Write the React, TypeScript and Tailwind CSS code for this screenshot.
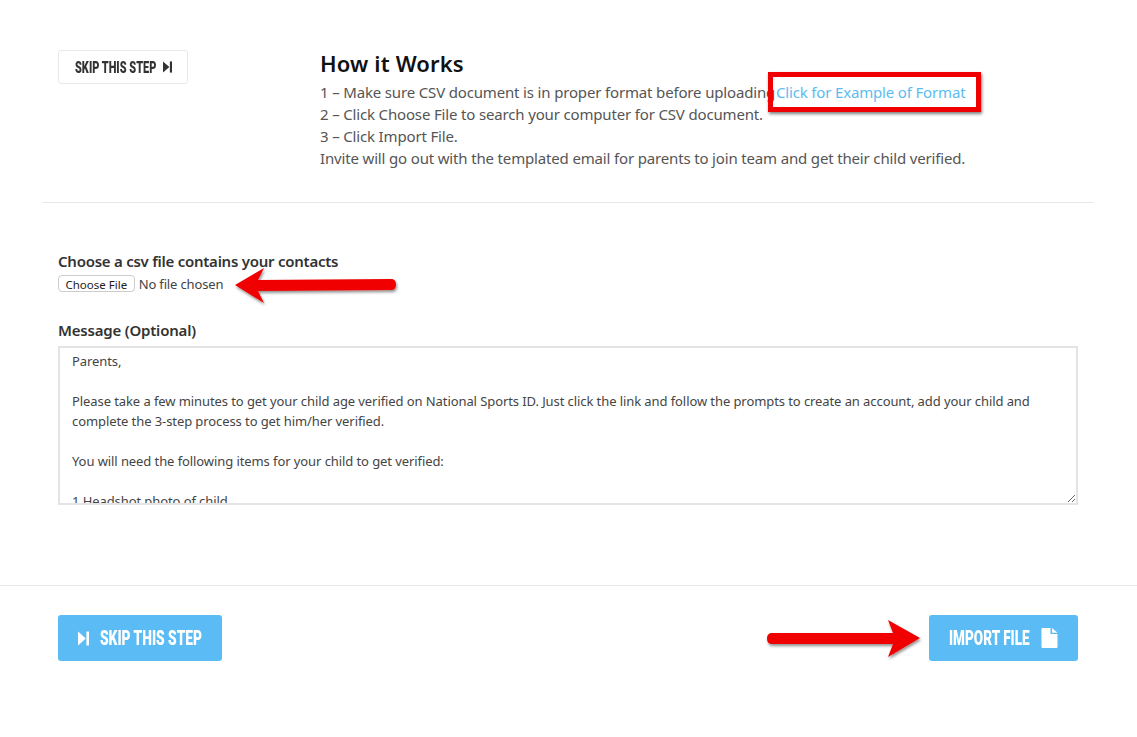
import React from "react";

const msg = `Parents,

Please take a few minutes to get your child age verified on National Sports ID. Just click the link and follow the prompts to create an account, add your child and complete the 3-step process to get him/her verified.

You will need the following items for your child to get verified:

1 Headshot photo of child
2 Copy of birth certificate`;

function SkipIcon({ className }: { className: string }) {
  return (
    <svg viewBox="0 0 11 14" className={className} fill="currentColor" preserveAspectRatio="none">
      <path d="M0 0.5 L7.8 7 L0 13.5 Z" />
      <rect x="8.4" y="0.5" width="2.6" height="13" />
    </svg>
  );
}

export default function App() {
  return (
    <div className="relative h-[737px] w-[1137px] overflow-hidden bg-white font-['Noto_Sans',sans-serif] text-[#555]">
      <div className="ml-[43px] mr-[44px] flex h-[203px] border-b border-[#e6e6e6] pl-[15px] pt-[50px]">
        <button className="flex h-[34px] w-[130px] flex-none items-center gap-[6px] rounded-[3px] border border-[#e8e8e8] bg-white pl-[16px] text-[#333]">
          <span className="block w-[82px] flex-none">
            <span className="block origin-left scale-x-[0.645] whitespace-nowrap text-left font-['Roboto',sans-serif] text-[17px] font-black leading-[20px]">SKIP THIS STEP</span>
          </span>
          <SkipIcon className="h-[12px] w-[9px]" />
        </button>
        <div className="-mt-[1px] ml-[132px] tracking-[-0.16px]">
          <h2 className="h-[32px] text-[22px] font-semibold leading-[29px] tracking-[0.15px] text-[#111]">How it Works</h2>
          <p className="whitespace-nowrap text-[15px] leading-[22px]">
            1 – Make sure CSV document is in proper format before uploading{" "}
            <a className="-ml-[3px] text-[#5bbcf0]">Click for Example of Format</a>
          </p>
          <p className="text-[15px] leading-[22px]">2 – Click Choose File to search your computer for CSV document.</p>
          <p className="text-[15px] leading-[22px]">3 – Click Import File.</p>
          <p className="text-[15px] leading-[22px]">Invite will go out with the templated email for parents to join team and get their child verified.</p>
        </div>
      </div>

      <div className="h-[383px] border-b border-[#e6e6e6] px-[58px] pt-[46px]">
        <label className="block text-[15px] font-semibold leading-[24px] tracking-[-0.25px] text-[#333]">Choose a csv file contains your contacts</label>
        <div className="mt-[1px] flex h-[22px] items-center">
          <input
            type="file"
            className="w-[200px] text-[13px] tracking-[-0.15px] text-[#444] file:mr-[4px] file:h-[17px] file:rounded-[4px] file:border file:border-[#ccc] file:bg-white file:px-[6.5px] file:text-[11.5px] file:tracking-normal file:text-[#222]"
          />
        </div>
        <label className="mt-[22px] block text-[15px] font-semibold leading-[24px] tracking-[-0.2px] text-[#333]">Message (Optional)</label>
        <textarea
          readOnly
          defaultValue={msg}
          className="mt-[4px] block h-[159px] w-[1020px] border-2 border-[#e4e4e4] px-[12px] py-[3px] text-[13px] leading-[20px] tracking-[-0.085px] text-[#444] outline-none"
        />
      </div>

      <div className="flex justify-between pl-[58px] pr-[59px] pt-[29px]">
        <button className="flex h-[46px] w-[164px] items-center gap-[11px] rounded-[3px] bg-[#5bbcf5] pl-[20px] text-white">
          <SkipIcon className="h-[15px] w-[11px]" />
          <span className="block w-[102px] flex-none">
            <span className="block origin-left scale-x-[0.655] whitespace-nowrap text-left font-['Roboto',sans-serif] text-[21px] font-black leading-[24px]">SKIP THIS STEP</span>
          </span>
        </button>
        <button className="flex h-[46px] w-[149px] items-center gap-[11px] rounded-[3px] bg-[#5bbcf5] pl-[20px] text-white">
          <span className="block w-[81px] flex-none">
            <span className="block origin-left scale-x-[0.645] whitespace-nowrap text-left font-['Roboto',sans-serif] text-[21px] font-black leading-[24px]">IMPORT FILE</span>
          </span>
          <svg viewBox="0 0 16 20" className="h-[20px] w-[17px]" fill="currentColor">
            <path d="M0 1 Q0 0 1 0 H9 V6 H16 V19 Q16 20 15 20 H1 Q0 20 0 19 Z" />
            <path d="M10.5 0 L16 4.8 H10.5 Z" />
          </svg>
        </button>
      </div>

      {/* Annotations over the page */}
      <div className="absolute left-[768px] top-[72px] h-[40px] w-[213px] border-[5px] border-[#f00000] shadow-[1px_2px_3px_rgba(0,0,0,0.5)]" />
      <svg className="absolute left-0 top-0" width="1137" height="737" style={{ pointerEvents: "none" }}>
        <defs>
          <filter id="s" x="-10%" y="-30%" width="120%" height="160%">
            <feDropShadow dx="1" dy="2" stdDeviation="1.5" floodColor="#000" floodOpacity="0.45" />
          </filter>
        </defs>
        <path
          d="M235 285 L264 268 L258 280 L391 279 Q396 279 396 284.5 Q396 290 391 290 L258 291 L264 303 Z"
          fill="#f00000"
          filter="url(#s)"
        />
        <path
          d="M920 638 L888 620 L893 633 L772 633 Q767 633 767 638.5 Q767 644 772 644 L893 644 L888 657 Z"
          fill="#f00000"
          filter="url(#s)"
        />
      </svg>
    </div>
  );
}
